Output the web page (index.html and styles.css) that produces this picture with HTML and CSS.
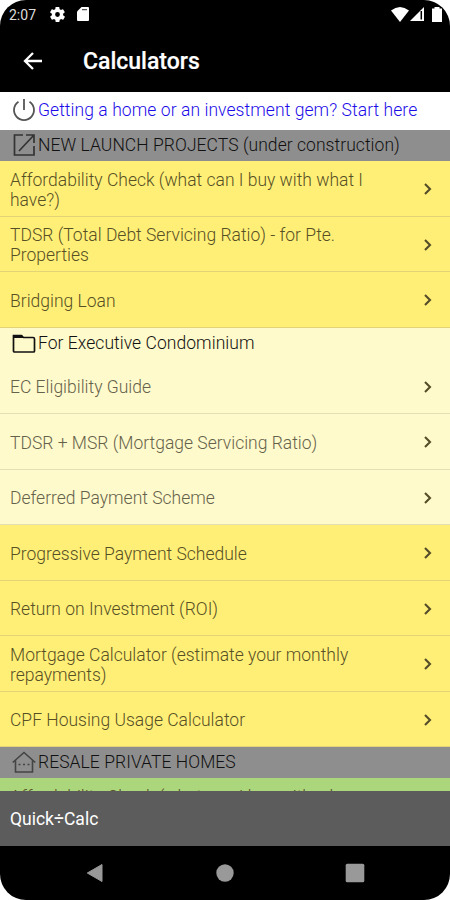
FILE: index.html
```html
<!DOCTYPE html>
<html lang="en">
<head>
<meta charset="utf-8">
<title>Calculators</title>
<link rel="stylesheet" href="styles.css">
</head>
<body>
<svg class="defs" aria-hidden="true"><symbol id="chevron" viewBox="0 0 10 14"><path d="M2 2l5 5-5 5" fill="none" stroke="currentColor" stroke-width="2.1"/></symbol></svg>
<div class="phone">
  <div class="status">
    <span class="time">2:07</span>
    <svg class="gear" viewBox="2 2 20 20"><path fill="#fff" fill-rule="evenodd" d="M19.4 13c0-.3.1-.6.1-1s0-.7-.1-1l2.1-1.7c.2-.1.2-.4.1-.6l-2-3.5c-.1-.2-.4-.3-.6-.2l-2.5 1a7 7 0 0 0-1.7-1l-.4-2.600c0-.2-.2-.4-.5-.4h-4c-.2 0-.4.2-.5.4L9 5a7 7 0 0 0-1.700 1l-2.500-1c-.2-.1-.5 0-.6.2l-2 3.500c-.1.2-.1.5.1.6L4.500 11v2l-2.100 1.700c-.2.1-.2.4-.1.6l2 3.500c.1.2.4.3.6.2l2.500-1c.5.4 1.100.7 1.700 1l.4 2.600c0 .2.2.4.5.4h4c.2 0 .5-.2.5-.4L15 19c.6-.3 1.200-.6 1.700-1l2.500 1c.2.100.5 0 .6-.2l2-3.500c.1-.2.1-.5-.1-.6zM12 15.200a3.200 3.200 0 1 1 0-6.400 3.200 3.200 0 0 1 0 6.400z"/></svg>
    <svg class="card" viewBox="0 0 12 14"><path fill="#fff" d="M4.500 0H11a1 1 0 0 1 1 1v12a1 1 0 0 1-1 1H1a1 1 0 0 1-1-1V4.500z"/><path d="M5 2.700h5" stroke="#555" stroke-width="1.300"/></svg>
    <span class="spacer"></span>
    <svg class="wifi" viewBox="0 0 18 15"><path fill="#fff" d="M0 3.600Q9-3.600 18 3.600L9 15z"/></svg>
    <svg class="signal" viewBox="0 0 14 14"><path fill="#fff" d="M14 0v14H0z"/><path d="M11.300 4v8.500" stroke="#000" stroke-width="1.500"/></svg>
    <svg class="battery" viewBox="0 0 10 15"><path fill="#fff" d="M2.500 1.500V0h5v1.500H10V15H0V1.500z"/></svg>
  </div>
  <header class="appbar">
    <svg class="back" viewBox="0 0 20 18"><path d="M19 9H2M10 1L2 9l8 8" fill="none" stroke="#fff" stroke-width="2.300"/></svg>
    <h1>Calculators</h1>
  </header>
  <main class="list">
    <div class="start">
      <svg class="icon" viewBox="0 0 24 24"><path d="M12 1v11M6.500 3.700a10 10 0 1 0 11 0" fill="none" stroke="#555" stroke-width="1.800"/></svg>
      <span>Getting a home or an investment gem? Start here</span>
    </div>
    <div class="section">
      <svg class="icon" viewBox="0 0 24 24"><path d="M11 2H2.500v20H22V13M14 2h8v8M22 2L7 18" fill="none" stroke="#333" stroke-width="1.700"/></svg>
      <span>NEW LAUNCH PROJECTS (under construction)</span>
    </div>
    <div class="row"><span>Affordability Check (what can I buy with what I<br>have?)</span><svg class="chev"><use href="#chevron"/></svg></div>
    <div class="row"><span>TDSR (Total Debt Servicing Ratio) - for Pte.<br>Properties</span><svg class="chev"><use href="#chevron"/></svg></div>
    <div class="row"><span>Bridging Loan</span><svg class="chev"><use href="#chevron"/></svg></div>
    <div class="section ec">
      <svg class="icon" viewBox="0 0 24 24"><path d="M1.500 20V4.500h8l2 2H21q1.500 0 1.500 1.500v12q0 1-1 1h-19q-1 0-1-1z" fill="none" stroke="#111" stroke-width="1.700"/><path d="M1 4h8.500l2 3H1z" fill="#111"/></svg>
      <span>For Executive Condominium</span>
    </div>
    <div class="row pale"><span>EC Eligibility Guide</span><svg class="chev"><use href="#chevron"/></svg></div>
    <div class="row pale"><span>TDSR + MSR (Mortgage Servicing Ratio)</span><svg class="chev"><use href="#chevron"/></svg></div>
    <div class="row pale"><span>Deferred Payment Scheme</span><svg class="chev"><use href="#chevron"/></svg></div>
    <div class="row"><span>Progressive Payment Schedule</span><svg class="chev"><use href="#chevron"/></svg></div>
    <div class="row"><span>Return on Investment (ROI)</span><svg class="chev"><use href="#chevron"/></svg></div>
    <div class="row"><span>Mortgage Calculator (estimate your monthly<br>repayments)</span><svg class="chev"><use href="#chevron"/></svg></div>
    <div class="row"><span>CPF Housing Usage Calculator</span><svg class="chev"><use href="#chevron"/></svg></div>
    <div class="section">
      <svg class="icon" viewBox="0 0 24 24"><path d="M.7 12.500L12 2.500l11.300 10M3.500 10.500V22h17V10.500" fill="none" stroke="#444" stroke-width="1.600"/><path d="M6.500 14.500h2m2.500 0h2m2.500 0h2" stroke="#444" stroke-width="1.300"/></svg>
      <span>RESALE PRIVATE HOMES</span>
    </div>
    <div class="row green"><span>Affordability Check (what can I buy with wh</span></div>
  </main>
  <footer class="quick">Quick÷Calc</footer>
  <nav class="nav">
    <svg viewBox="0 0 20 20"><path d="M2.300 10L17 1.500v17z" fill="#999" stroke="#999" stroke-linejoin="round"/></svg>
    <svg viewBox="0 0 20 20"><circle cx="10" cy="10" r="8.700" fill="#999"/></svg>
    <svg viewBox="0 0 20 20"><rect x=".7" y=".7" width="18.600" height="18.600" rx="1.500" fill="#999"/></svg>
  </nav>
</div>
</body>
</html>
```
FILE: styles.css
```css
* { box-sizing: border-box; }
body { margin: 0; background: #fff; font-family: Roboto, sans-serif; }
.defs { display: block; width: 0; height: 0; }
svg { display: block; flex: none; }
.phone { width: 450px; height: 900px; display: flex; flex-direction: column; background: #000; border-radius: 26px; overflow: hidden; }
.status { height: 30px; flex: none; display: flex; align-items: center; padding: 0 8px 2px 9px; color: #ddd; }
.time { width: 41px; padding-top: 2px; font-size: 14px; }
.gear { width: 15px; height: 15px; }
.card { width: 12px; height: 14px; margin-left: 12px; }
.spacer { flex: 1; }
.wifi { width: 18px; height: 15px; }
.signal { width: 14px; height: 14px; margin-left: 1px; }
.battery { width: 10px; height: 15px; margin-left: 8px; }
.appbar { height: 62px; flex: none; display: flex; align-items: center; padding-left: 23px; }
.back { width: 20px; height: 18px; }
h1 { margin: 2px 0 0 40px; font-size: 23px; font-weight: 500; color: #fff; line-height: 30px; -webkit-text-stroke: 0.2px #fff; }
.list { height: 699px; flex: none; overflow: hidden; background: #fff; }
.start, .section { display: flex; align-items: center; padding-left: 12px; font-size: 17.500px; white-space: nowrap; }
.start { height: 38px; padding-bottom: 2px; color: #1c0ce8; font-weight: 350; letter-spacing: 0.07px; }
.section { height: 31px; padding-bottom: 1px; background: #8e8e8e; color: #111; font-weight: 300; letter-spacing: 0.05px; }
.start .icon, .section .icon { width: 24px; height: 24px; margin-right: 2px; }
.section.ec { background: #fffacb; }
.row { height: 55.500px; display: flex; align-items: center; justify-content: space-between; padding: 2px 17px 0 10px; background: #ffef77; border-bottom: 1px solid #e3d477; color: #574f25; font-size: 17.500px; line-height: 20px; font-weight: 300; white-space: nowrap; }
.row span { padding-top: 1px; }
.row.pale { background: #fffacb; border-color: #e3deb4; color: #65624b; }
.row.green { align-items: flex-start; background: #acd67b; padding-top: 8px; border: 0; }
.chev { width: 10px; height: 14px; color: #554d28; }
.quick { height: 55px; flex: none; display: flex; align-items: center; padding-left: 10px; background: #5c5c5c; color: #fff; font-size: 17.500px; }
.nav { height: 54px; flex: none; display: flex; justify-content: space-between; align-items: center; padding: 0 85px; }
.nav svg { width: 20px; height: 20px; }
```
